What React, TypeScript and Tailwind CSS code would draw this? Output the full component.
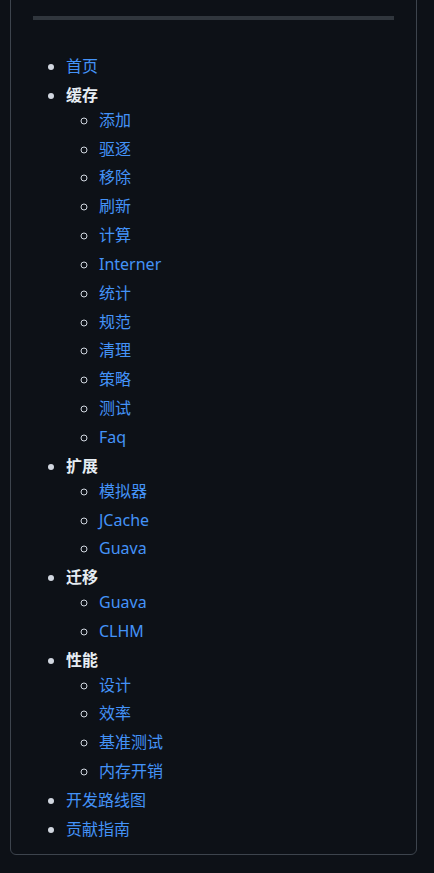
type Item = { label: string; children?: string[] };

const nav: Item[] = [
  { label: "首页" },
  {
    label: "缓存",
    children: ["添加", "驱逐", "移除", "刷新", "计算", "Interner", "统计", "规范", "清理", "策略", "测试", "Faq"],
  },
  { label: "扩展", children: ["模拟器", "JCache", "Guava"] },
  { label: "迁移", children: ["Guava", "CLHM"] },
  { label: "性能", children: ["设计", "效率", "基准测试", "内存开销"] },
  { label: "开发路线图" },
  { label: "贡献指南" },
];

function NavLink({ children }: { children: string }) {
  return (
    <a href="#" className="text-[#4493f8] no-underline hover:underline">
      {children}
    </a>
  );
}

export default function App() {
  return (
    <div className="min-h-[873px] overflow-hidden bg-[#0d1117] pb-5 font-['Noto_Sans','Noto_Sans_CJK_SC',sans-serif] text-base text-[#e6edf3]">
      <div className="-mt-[10px] ml-[10px] w-[407px] rounded-b-md border border-[#3d444d] px-[22px] pb-[12px] pt-[25px]">
        <hr className="h-1 border-0 bg-[#30363d]" />
        <ul className="mt-[34px] list-disc pl-[33px] leading-[24.85px] marker:text-[#d1d7e0] [&>li+li]:mt-1">
          {nav.map((item) => (
            <li key={item.label}>
              {item.children ? (
                <>
                  <strong className="font-semibold text-[#e6edf3]">{item.label}</strong>
                  <ul className="list-[circle] pl-[33px] [&>li+li]:mt-1">
                    {item.children.map((c) => (
                      <li key={c}>
                        <NavLink>{c}</NavLink>
                      </li>
                    ))}
                  </ul>
                </>
              ) : (
                <NavLink>{item.label}</NavLink>
              )}
            </li>
          ))}
        </ul>
      </div>
    </div>
  );
}
